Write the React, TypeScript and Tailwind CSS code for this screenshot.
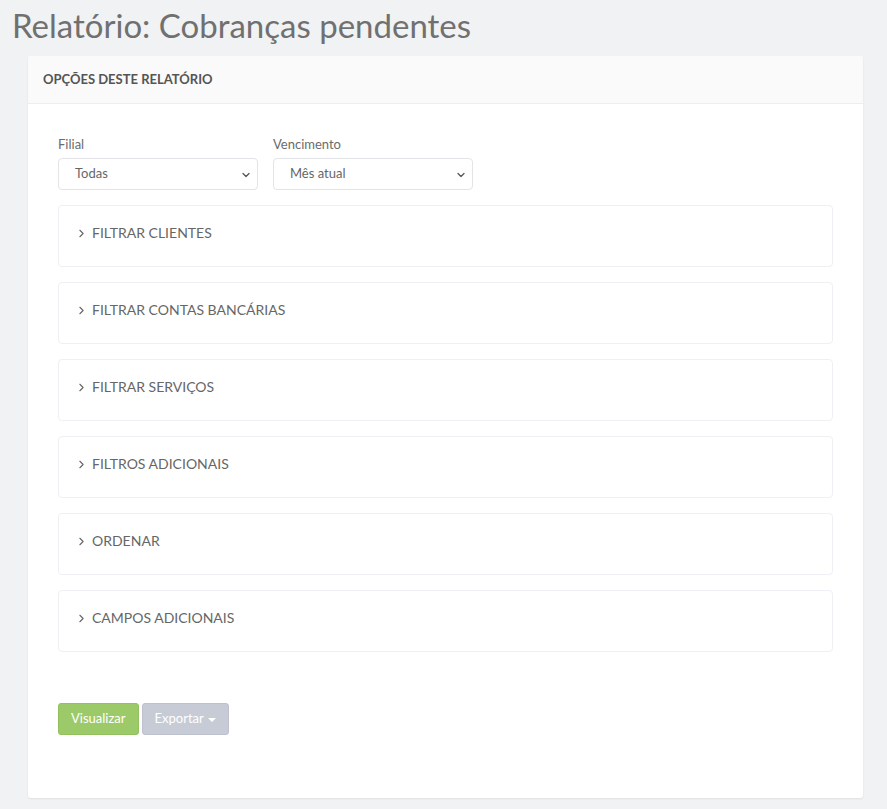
import { ChevronRight, ChevronDown } from 'lucide-react';

const panels = [
  'Filtrar clientes',
  'Filtrar contas bancárias',
  'Filtrar serviços',
  'Filtros adicionais',
  'Ordenar',
  'Campos adicionais',
];

function SelectField({ label, value }: { label: string; value: string }) {
  return (
    <div className="flex flex-col w-[200px]">
      <label className="text-[13px] leading-[20px] text-[#6b6b6b] mb-[4px]">{label}</label>
      <div className="relative h-[32px] rounded-[4px] border border-[#e3e4e8] bg-white flex items-center pl-[16px]">
        <span className="text-[13px] text-[#666]">{value}</span>
        <ChevronDown size={12} strokeWidth={2.5} className="absolute right-[5px] top-[10px] text-[#555]" />
      </div>
    </div>
  );
}

export default function App() {
  return (
    <div className="min-h-screen bg-[#f1f2f4] font-['Lato',sans-serif] pb-[10px]">
      {/* Page title */}
      <h1 className="h-[56px] pl-[12px] pt-[5px] text-[33px] leading-[40px] text-[#707070]">
        Relatório: Cobranças pendentes
      </h1>

      <div className="mx-[28px] w-[835px] bg-white rounded-[3px] shadow-[0_1px_2px_rgba(0,0,0,0.08)]">
        {/* Card header */}
        <div className="h-[48px] flex items-center px-[15px] bg-[#fafafa] border-b border-[#eceef1] rounded-t-[3px]">
          <span className="text-[13px] font-bold uppercase text-[#555]">Opções deste relatório</span>
        </div>

        {/* Card body */}
        <div className="px-[30px] pt-[30px] pb-[63px]">
          <div className="flex gap-[15px]">
            <SelectField label="Filial" value="Todas" />
            <SelectField label="Vencimento" value="Mês atual" />
          </div>

          <div className="flex flex-col gap-[15px] mt-[15px]">
            {panels.map((p) => (
              <div
                key={p}
                className="h-[62px] flex items-start gap-[4px] pl-[16px] pt-[17px] rounded-[4px] border border-[#eef0f4] bg-white"
              >
                <ChevronRight size={13} strokeWidth={2} className="text-[#666] mt-[4px]" />
                <span className="text-[14px] leading-[20px] uppercase text-[#666]">{p}</span>
              </div>
            ))}
          </div>

          <div className="flex gap-[3px] mt-[51px]">
            <button className="h-[32px] px-[12px] rounded-[3px] bg-[#9dca68] border border-[#93c15f] text-white text-[13px]">
              Visualizar
            </button>
            <button className="h-[32px] px-[12px] rounded-[3px] bg-[#c7cbd6] border border-[#bcc1cd] text-white text-[13px] flex items-center gap-[4px]">
              Exportar
              <span className="w-0 h-0 border-l-[4px] border-r-[4px] border-t-[4px] border-l-transparent border-r-transparent border-t-white mt-[2px]" />
            </button>
          </div>
        </div>
      </div>
    </div>
  );
}
